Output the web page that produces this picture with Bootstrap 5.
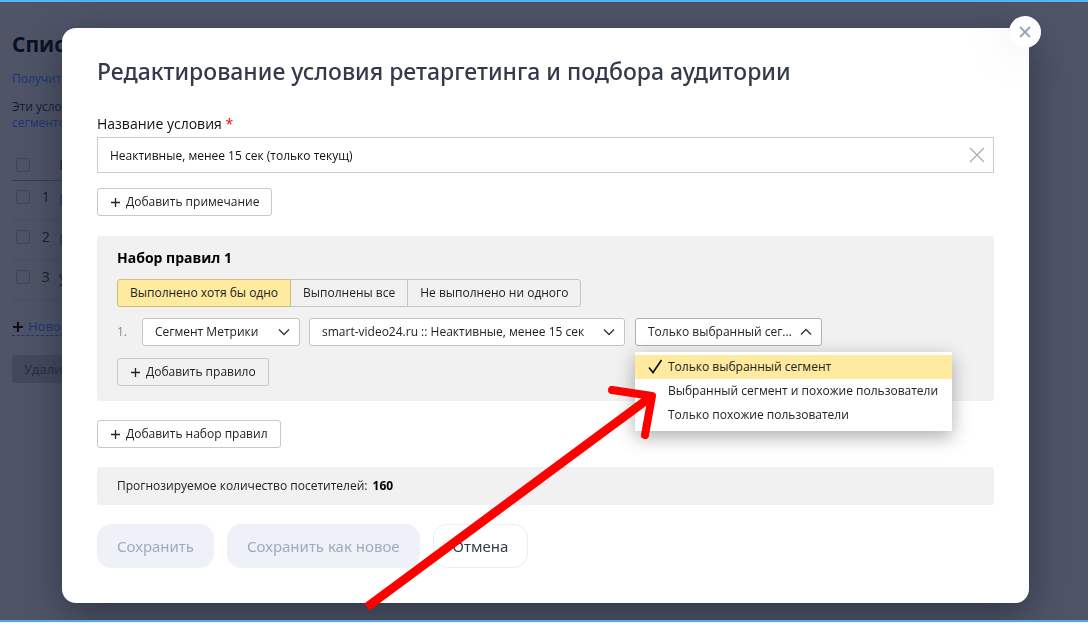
<!DOCTYPE html>
<html lang="ru">
<head>
<meta charset="utf-8">
<meta name="viewport" content="width=device-width, initial-scale=1">
<title>Редактирование условия ретаргетинга</title>
<link href="https://cdn.jsdelivr.net/npm/bootstrap@5.3.0/dist/css/bootstrap.min.css" rel="stylesheet">
<style>
  body { font-family: "Open Sans", "Noto Sans", sans-serif; font-size: 12px; line-height: 16px; color: #222; background: #4f5567; }
  .app-frame { min-height: 100vh; border-top: 2px solid #55b4f3; overflow: hidden; }
  .frame-foot { height: 3px; background: #5aa5e2; border-bottom: 1px solid #e8f4fd; z-index: 1060; }

  /* dimmed list behind the dialog */
  .backpage { padding: 29px 0 0 12px; color: #161c2c; width: 70px; white-space: nowrap; }
  .backpage h1 { font-size: 21px; line-height: 26px; font-weight: 700; margin: 0 0 14px; color: #0b1022; }
  .backpage a { color: #1b3677; text-decoration: none; }
  .backpage p { margin: 0 0 12px; }
  .list-grid { width: 100%; margin: 16px 0 0; }
  .list-grid td, .list-grid th { height: 40px; padding: 0 0 6px; font-weight: 400; font-size: 14px; border-bottom: 1px solid #485064; vertical-align: middle; }
  .list-grid th { height: 33px; padding: 4px 0 0; border-bottom-color: #363e51; }
  .list-grid .c-tick { width: 30px; padding-left: 4px; }
  .list-grid .c-num { width: 18px; }
  .list-grid .form-check-input { display: block; margin: 0; width: 14px; height: 14px; border-radius: 3px; background: transparent; border-color: #3e465a; }
  .new-link { display: inline-block; border-bottom: 1px dashed #1b3677; font-size: 13px; line-height: 18px; margin: 16px 0 19px; }
  .btn-gone { background: #434a5c; color: #252c3d; border: 0; border-radius: 3px; padding: 0 12px; height: 28px; font-size: 13px; line-height: 28px; }

  /* dialog */
  .wide-dialog { max-width: none; margin: 28px 59px 20px 62px; }
  .sheet { border: 0; border-radius: 14px; padding: 27px 35px 35px; box-shadow: 0 12px 40px rgba(30,38,56,.65); align-items: flex-start; }
  .sheet h2 { font-family: "Noto Sans", sans-serif; font-size: 23px; line-height: 32px; font-weight: 500; color: #323a4c; margin: 0 0 25px; }
  .round-close { top: -12px; right: -12px; width: 32px; height: 32px; border: 0; border-radius: 50%; background: #fff; box-shadow: 0 4px 48px rgba(80,100,140,.16); padding: 0; display: grid; place-items: center; }
  .name-label { font-size: 14px; line-height: 24px; color: #111; margin: 0 0 1px; }
  .need { color: #e00; }
  .name-box { height: 36px; border: 1px solid #ccc; border-radius: 0; font-size: 12px; padding: 0 40px 0 12px; color: #111; }
  .clear-btn { top: 9px; right: 8px; padding: 0; border: 0; background: none; line-height: 0; }
  .btn-line { height: 28px; padding: 0 12px; font-size: 12px; line-height: 26px; border: 1px solid #c8c8c8; border-radius: 3px; color: #222; display: inline-flex; align-items: center; gap: 5px; }
  .note-btn { margin-top: 15px; }
  .rules { background: #f1f1f1; border-radius: 3px; padding: 10px 20px 15px; margin: 20px 0 19px; }
  .rules h3 { font-size: 14px; line-height: 24px; font-weight: 700; margin: 0 0 9px; color: #000; }
  .modes .btn { height: 28px; padding: 0 12px; font-size: 12px; line-height: 26px; color: #222; border: 1px solid #c4c4c4; border-radius: 3px; }
  .modes .btn-check:checked + .btn { background: #ffeba0; border-color: #d0bd7c; color: #222; }
  .rule-row { margin: 11px 0 12px; }
  .rule-row > .w-segment { margin: 0 10px 0 9px; }
  .rule-num { width: 25px; color: #888; }
  .pick { height: 28px; border: 1px solid #c4c4c4; border-radius: 3px; font-size: 12px; line-height: 26px; padding: 0 28px 0 12px; color: #222; background-size: 12px 8px; background-position: right 9px center;
    background-image: url("data:image/svg+xml,%3Csvg xmlns='http://www.w3.org/2000/svg' viewBox='0 0 12 8'%3E%3Cpath d='M1 1.5l5 5 5-5' fill='none' stroke='%23333' stroke-width='1.3'/%3E%3C/svg%3E"); }
  .pick-open { border-color: #b0b0b0;
    background-image: url("data:image/svg+xml,%3Csvg xmlns='http://www.w3.org/2000/svg' viewBox='0 0 12 8'%3E%3Cpath d='M1 6.5l5-5 5 5' fill='none' stroke='%23333' stroke-width='1.3'/%3E%3C/svg%3E"); }
  .w-kind { width: 158px; } .w-segment { width: 316px; } .w-scope { width: 187px; }
  .scope-menu { display: block; top: 34px; left: 0; width: 317px; min-width: 0; padding: 3px 0 4px; margin: 0; border: 0; border-radius: 0; box-shadow: 0 6px 18px rgba(0,0,0,.32); font-size: 12px; }
  .scope-menu .dropdown-item { height: 24px; line-height: 24px; padding: 0 0 0 33px; color: #222; position: relative; }
  .scope-menu .dropdown-item.active { background: #ffeba0; color: #222; }
  .scope-menu svg { position: absolute; left: 13px; top: 4px; }
  .forecast { background: #f1f1f1; border-radius: 3px; height: 38px; padding: 0 20px; line-height: 37px; margin: 19px 0; }
  .forecast output { font-weight: 700; color: #000; margin-left: 2px; }
  .acts { gap: 13px; }
  .btn-act { font-family: "Noto Sans", sans-serif; height: 44px; padding: 0 19px; font-size: 15px; line-height: 42px; border-radius: 14px; border: 1px solid #ebeef6; color: #343c4e; background: #fff; }
  .btn-act:disabled { background: #eef1f7; color: #a0abc0; border-color: #eef1f7; opacity: 1; }
  .pointer-arrow { left: 300px; top: 356px; pointer-events: none; z-index: 1100; }
</style>
</head>
<body>
<div class="app-frame">
  <main class="backpage">
    <h1>Спис</h1>
    <p><a href="#">Получит</a></p>
    <p>Эти усло<br><a href="#">сегменто</a></p>
    <table class="list-grid">
      <thead><tr><th class="c-tick"><input class="form-check-input" type="checkbox" aria-label="Все"></th><th class="c-num"></th><th>И</th></tr></thead>
      <tbody>
        <tr><td class="c-tick"><input class="form-check-input" type="checkbox" aria-label="1"></td><td class="c-num">1</td><td><a href="#">р</a></td></tr>
        <tr><td class="c-tick"><input class="form-check-input" type="checkbox" aria-label="2"></td><td class="c-num">2</td><td><a href="#">р</a></td></tr>
        <tr><td class="c-tick"><input class="form-check-input" type="checkbox" aria-label="3"></td><td class="c-num">3</td><td>у</td></tr>
      </tbody>
    </table>
    <a class="new-link" href="#"><svg width="12" height="12" viewBox="0 0 12 12" class="me-1" aria-hidden="true"><path d="M6 1v10M1 6h10" stroke="#0b1022" stroke-width="2.2"/></svg>Новое</a><br>
    <button class="btn-gone" type="button" disabled>Удали</button>
  </main>
</div>
<div class="frame-foot position-fixed bottom-0 start-0 end-0"></div>

<div class="modal d-block" role="dialog" aria-labelledby="dlgTitle">
  <div class="modal-dialog wide-dialog">
    <form class="modal-content sheet">
      <button class="round-close position-absolute" type="button" aria-label="Закрыть"><svg width="12" height="12" viewBox="0 0 12 12"><path d="M1 1l10 10M11 1L1 11" stroke="#98a3b8" stroke-width="1.8"/></svg></button>
      <h2 id="dlgTitle">Редактирование условия ретаргетинга и подбора аудитории</h2>
      <label class="name-label" for="condName">Название условия <span class="need">*</span></label>
      <div class="position-relative w-100">
        <input class="form-control name-box" id="condName" type="text" value="Неактивные, менее 15 сек (только текущ)">
        <button class="clear-btn position-absolute" type="button" aria-label="Очистить"><svg width="18" height="18" viewBox="0 0 18 18"><path d="M2 2l14 14M16 2L2 16" stroke="#aaa" stroke-width="1.2"/></svg></button>
      </div>
      <button class="btn btn-line note-btn" type="button"><svg width="11" height="11" viewBox="0 0 11 11"><path d="M5.500 1v9M1 5.500h9" stroke="#222" stroke-width="1.3"/></svg>Добавить примечание</button>

      <section class="rules w-100">
        <h3>Набор правил 1</h3>
        <div class="btn-group modes" role="group" aria-label="Условие набора">
          <input type="radio" class="btn-check" name="mode" id="m1" checked><label class="btn" for="m1">Выполнено хотя бы одно</label>
          <input type="radio" class="btn-check" name="mode" id="m2"><label class="btn" for="m2">Выполнены все</label>
          <input type="radio" class="btn-check" name="mode" id="m3"><label class="btn" for="m3">Не выполнено ни одного</label>
        </div>
        <div class="d-flex align-items-center rule-row">
          <span class="rule-num">1.</span>
          <select class="form-select pick w-kind" aria-label="Тип"><option>Сегмент Метрики</option></select>
          <select class="form-select pick w-segment" aria-label="Сегмент"><option>smart-video24.ru :: Неактивные, менее 15 сек</option></select>
          <div class="position-relative">
            <select class="form-select pick pick-open w-scope" aria-label="Охват"><option>Только выбранный сег...</option></select>
            <div class="dropdown-menu scope-menu show" role="listbox">
              <a class="dropdown-item active" href="#" role="option" aria-selected="true"><svg width="15" height="15" viewBox="0 0 15 15"><path d="M1 8.500l4 5L13.500 1" fill="none" stroke="#111" stroke-width="1.700"/></svg>Только выбранный сегмент</a>
              <a class="dropdown-item" href="#" role="option">Выбранный сегмент и похожие пользователи</a>
              <a class="dropdown-item" href="#" role="option">Только похожие пользователи</a>
            </div>
          </div>
        </div>
        <button class="btn btn-line" type="button"><svg width="11" height="11" viewBox="0 0 11 11"><path d="M5.500 1v9M1 5.500h9" stroke="#222" stroke-width="1.3"/></svg>Добавить правило</button>
      </section>

      <button class="btn btn-line" type="button"><svg width="11" height="11" viewBox="0 0 11 11"><path d="M5.500 1v9M1 5.500h9" stroke="#222" stroke-width="1.3"/></svg>Добавить набор правил</button>
      <div class="forecast w-100">Прогнозируемое количество посетителей: <output>160</output></div>
      <div class="d-flex acts">
        <button class="btn btn-act" type="submit" disabled>Сохранить</button>
        <button class="btn btn-act" type="button" disabled>Сохранить как новое</button>
        <button class="btn btn-act" type="button">Отмена</button>
      </div>
      <svg class="pointer-arrow position-absolute" width="300" height="230" viewBox="362 384 300 230" aria-hidden="true"><path d="M367 607L652 396" stroke="#f00" stroke-width="9"/><path d="M612 390l40 6-7 39" fill="none" stroke="#f00" stroke-width="8" stroke-linecap="round" stroke-linejoin="round"/></svg>
    </form>
  </div>
</div>
<script src="https://cdn.jsdelivr.net/npm/bootstrap@5.3.0/dist/js/bootstrap.bundle.min.js"></script>
</body>
</html>
